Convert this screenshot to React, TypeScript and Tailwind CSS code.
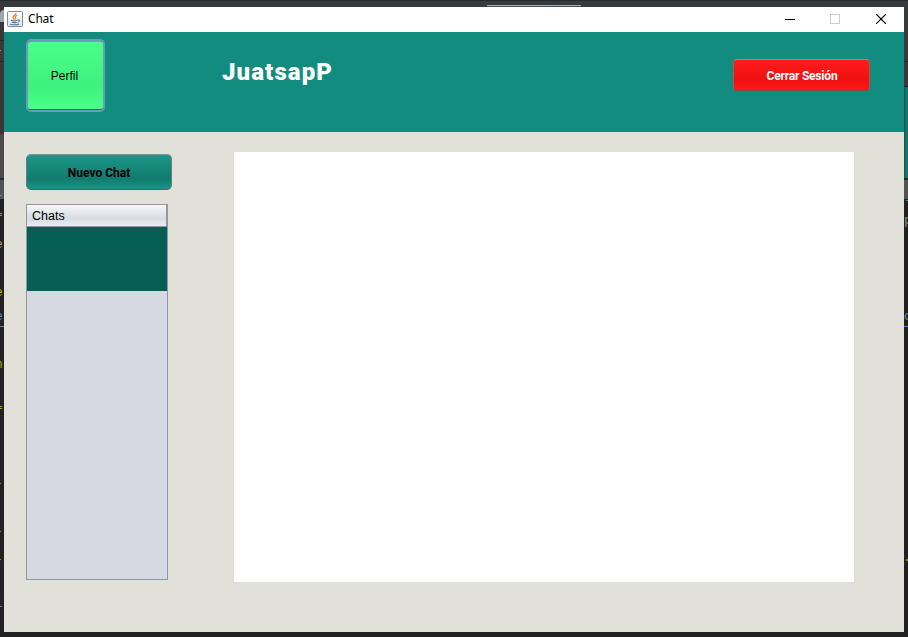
import React from "react";

function JavaIcon() {
  return (
    <svg width="16" height="16" viewBox="0 0 16 16" className="mb-px shrink-0">
      <defs>
        <linearGradient id="tile" x1="0" y1="0" x2="0" y2="1">
          <stop offset="0" stopColor="#ffffff" />
          <stop offset="1" stopColor="#dfe5ea" />
        </linearGradient>
      </defs>
      <rect x="0.5" y="0.5" width="15" height="15" rx="1" fill="url(#tile)" stroke="#7890a5" />
      <path d="M8.8 2c.5 1.8-2.8 2.5-2.8 4.3 0 1 1 1.4 1.2 2.3M10.3 4.2c-1.8.6-2.5 1.5-1.9 2.4.4.6 0 1.3-.5 1.8" fill="none" stroke="#ee8a35" strokeWidth="1.3" />
      <path d="M4 9.3c1.5.6 4.6.5 6.2 0M4.8 11.2c1.4.5 3.7.5 5 0M10.6 9c2.5-.6 2.4 1.7-.1 2.3M3 12.8c-.2 1.1 7 1.2 9 .1" fill="none" stroke="#507a9c" strokeWidth="1.1" />
    </svg>
  );
}

function WindowControls() {
  return (
    <div className="ml-auto flex items-center pr-[17px]">
      <svg width="102" height="12" viewBox="0 0 102 12" shapeRendering="crispEdges" className="mb-px">
        <path d="M0 6.5h10" stroke="#000" />
        <rect x="45.5" y="1.5" width="9" height="9" fill="none" stroke="#cccccc" />
        <path d="M91.5 1.5l9 9M100.5 1.5l-9 9" stroke="#000" strokeWidth="1.1" strokeLinecap="square" shapeRendering="auto" />
      </svg>
    </div>
  );
}

function TitleBar() {
  return (
    <div className="flex h-[25px] shrink-0 items-center bg-white pl-[3px]">
      <JavaIcon />
      <span className="mb-[2px] ml-[5px] font-['Noto_Sans',sans-serif] text-[12px] leading-4 tracking-[-0.2px] text-black">Chat</span>
      <WindowControls />
    </div>
  );
}

function Header() {
  return (
    <header className="flex h-[100px] shrink-0 items-start bg-[#128c7e] pl-[22px] pr-[34px]">
      <button className="mt-[7px] h-[73px] w-[79px] rounded-[5px] border-2 border-[#659dbb] bg-[#496b67]">
        <span className="flex h-full w-full items-center justify-center rounded-[3px] border-t border-b border-t-[#8c9c98] border-b-[#3f655f] bg-linear-to-b from-[#4bff8b] via-[#3ef17e] via-65% to-[#48ff89] pr-[2px] font-['Liberation_Sans',Arial,sans-serif] text-[12px] text-black">
          Perfil
        </span>
      </button>
      <h1 className="ml-[117px] mt-[24px] font-[Roboto,sans-serif] text-[24px] font-black leading-8 tracking-[1.1px] text-white">
        JuatsapP
      </h1>
      <button className="ml-auto mt-[27px] h-[32px] w-[137px] rounded-[4px] border border-x-[#a25b55] border-t-[#b98179] border-b-[#814d49] bg-linear-to-b from-[#ff1c1c] via-[#f01010] via-65% to-[#ff1919] pl-px pt-[2px] font-[Roboto,sans-serif] text-[12px] font-bold leading-4 tracking-[-0.2px] text-white">
        Cerrar Sesión
      </button>
    </header>
  );
}

function Sidebar() {
  return (
    <aside className="w-[208px] shrink-0 pt-[2px]">
      <button className="h-[36px] w-[146px] rounded-[5px] border border-x-[#65827f] border-t-[#7d9693] border-b-[#575c66] bg-linear-to-b from-[#1b9789] via-[#117c6f] via-70% to-[#199587] pt-[2px] font-[Roboto,sans-serif] text-[12px] font-bold leading-4 text-black">
        Nuevo Chat
      </button>
      <div className="mt-[14px] h-[376px] w-[142px] border border-[#9297a1] bg-[#d6d9e2]">
        <div className="flex h-[22px] items-center border-b border-r border-[#9297a1] bg-linear-to-b from-[#f6f7f9] via-[#d9dbe2] via-65% to-[#e8ecf4] pl-[5px] font-['Liberation_Sans',Arial,sans-serif] text-[12.5px] leading-4 text-black">
          Chats
        </div>
        <div className="h-[64px] bg-[#075e54]" />
      </div>
    </aside>
  );
}

const leftGlyphs = [
  { text: "-", y: 36, color: "text-[#bbbbbb]" },
  { text: "r", y: 184, color: "text-[#8b8f94]" },
  { text: "f", y: 204, color: "text-[#9b9389]" },
  { text: "e", y: 230, color: "text-[#a79b88]" },
  { text: "e", y: 278, color: "text-[#b2b600]" },
  { text: "e", y: 302, color: "text-[#5689c2]" },
  { text: "n", y: 350, color: "text-[#9aa412]" },
  { text: "f", y: 397, color: "text-[#b2b600]" },
  { text: "-", y: 469, color: "text-[#aaaaaa]" },
  { text: "-", y: 517, color: "text-[#aaaaaa]" },
  { text: "-", y: 545, color: "text-[#b2b600]" },
  { text: "l", y: 589, color: "text-[#638489]" },
];

function LeftBackdrop() {
  return (
    <div className="relative w-1 shrink-0 overflow-hidden bg-[#222222]">
      <div className="h-[33px] bg-[#37393a]" />
      <div className="h-[22px] border-y border-[#202224] bg-[#37393a]" />
      <div className="h-[72px] bg-[#353738]" />
      <div className="h-[44px] bg-[#4c4b49]" />
      <div className="h-[2px] bg-[#292b2c]" />
      <div className="h-[19px] bg-[#505457]" />
      <div className="absolute left-0 top-[3px] h-[12px] w-1 rounded-tl-full bg-[#9da5aa]" />
      {leftGlyphs.map((g) => (
        <span
          key={g.y}
          style={{ top: g.y }}
          className={`absolute -left-[5px] font-['Liberation_Mono',monospace] text-[13px] leading-4 ${g.color}`}
        >
          {g.text}
        </span>
      ))}
      <div className="absolute left-0 top-[319px] h-px w-1 bg-[#5689c2]" />
    </div>
  );
}

function RightBackdrop() {
  return (
    <div className="relative w-1 shrink-0 overflow-hidden bg-[#202020]">
      <div className="h-[54px] bg-[#38393b]" />
      <div className="h-px bg-[#242424]" />
      <div className="h-[24px] bg-[#393739]" />
      <div className="h-px bg-[#202020]" />
      <div className="h-[91px] border-l border-[#26514a] bg-[#127669]" />
      <div className="h-[2px] bg-[#252525]" />
      <div className="h-[19px] bg-[#505354]" />
      <span className="absolute left-0 top-[206px] font-['Liberation_Mono',monospace] text-[13px] leading-4 text-[#938476]">p</span>
      <span className="absolute left-0 top-[302px] font-['Liberation_Mono',monospace] text-[13px] leading-4 text-[#5689c2]">c</span>
      <div className="absolute left-[2px] top-[193px] h-px w-[2px] bg-[#5689a8]" />
      <div className="absolute left-0 top-[319px] h-px w-1 bg-[#5689c2]" />
      <div className="absolute left-[2px] top-[552px] h-[2px] w-[2px] bg-[#789622]" />
    </div>
  );
}

export default function App() {
  return (
    <div className="flex h-[637px] w-[908px] flex-col overflow-hidden bg-[#222222]">
      <div className="flex h-[7px] shrink-0 flex-col justify-end border-t border-[#272a2c] bg-[#373a3c] pl-[487px]">
        <div className="flex h-[2px] w-[94px] flex-col bg-[#4c5156]">
          <div className="h-px bg-[#a2a9b0]" />
          <div className="ml-[62px] h-px w-[13px] bg-[#28577e]" />
        </div>
      </div>
      <div className="flex h-[625px] shrink-0">
        <LeftBackdrop />
        <main className="flex w-[900px] shrink-0 flex-col bg-[#e1e1da]">
          <TitleBar />
          <Header />
          <div className="flex grow pl-[22px] pt-5">
            <Sidebar />
            <section className="h-[430px] w-[620px] bg-white" />
          </div>
        </main>
        <RightBackdrop />
      </div>
    </div>
  );
}
